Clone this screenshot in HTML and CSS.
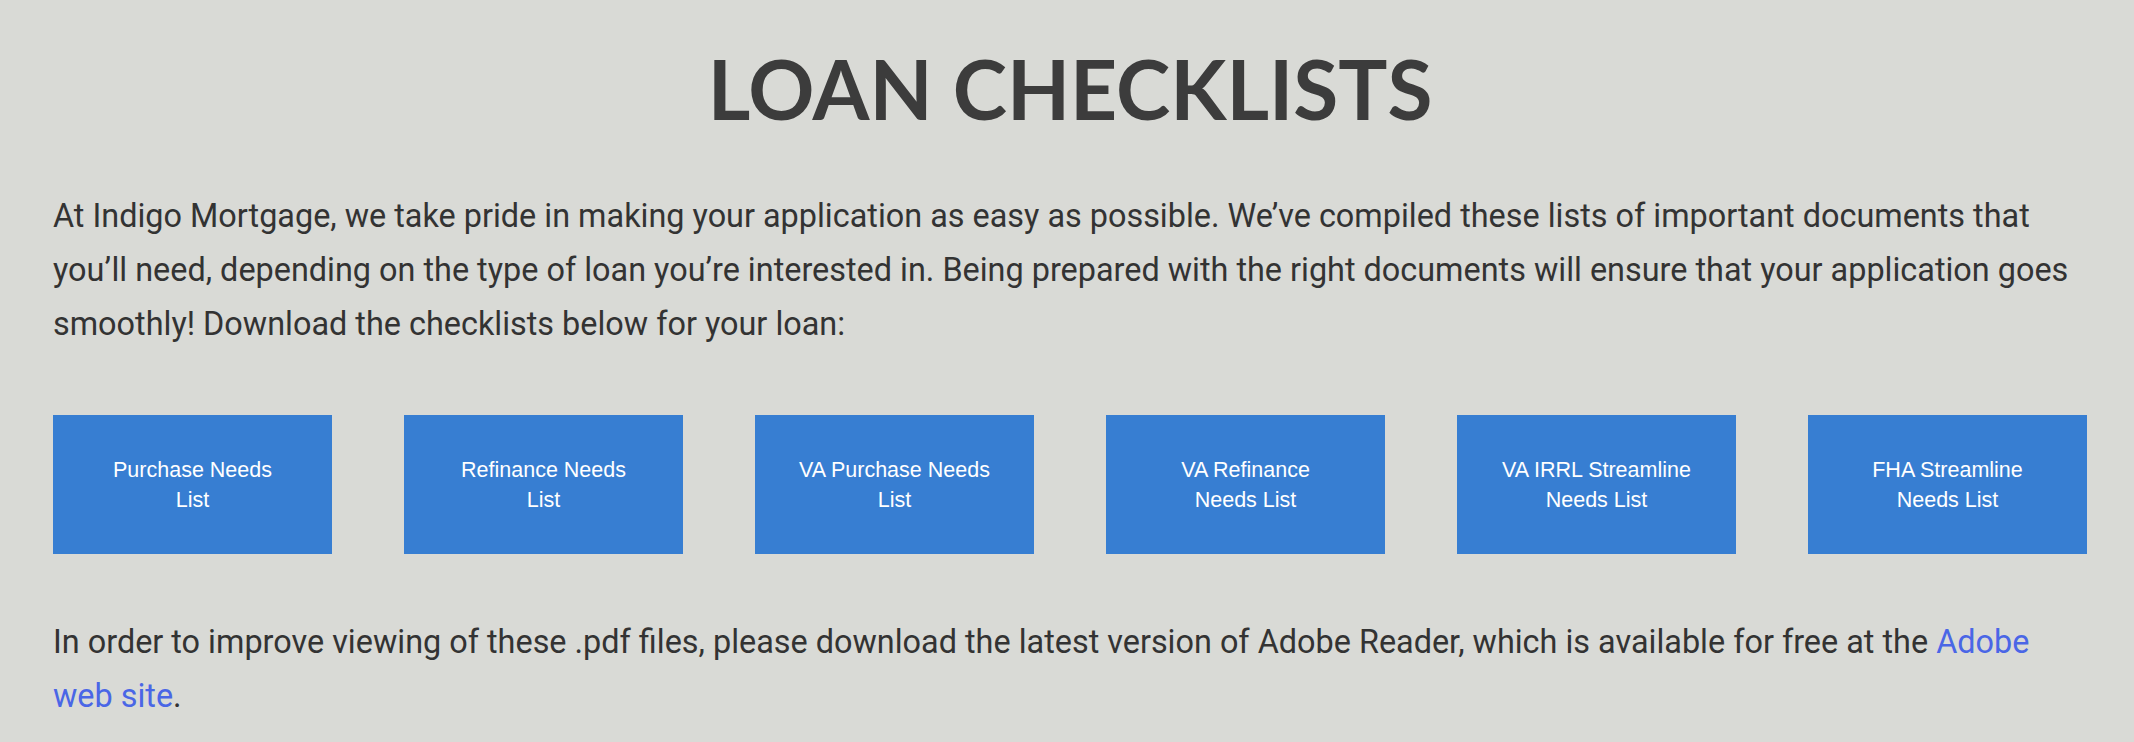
FILE: index.html
```html
<!DOCTYPE html>
<html lang="en">
<head>
<meta charset="utf-8">
<title>Loan Checklists</title>
<link rel="stylesheet" href="styles.css">
</head>
<body>
<main class="page">
  <h1 class="title">LOAN CHECKLISTS</h1>
  <p class="text intro">At Indigo Mortgage, we take pride in making your application as easy as possible. We’ve compiled these lists of important documents that you’ll need, depending on the type of loan you’re interested in. Being prepared with the right documents will ensure that your application goes smoothly! Download the checklists below for your loan:</p>
  <div class="buttons">
    <a class="btn" href="#">Purchase Needs List</a>
    <a class="btn" href="#">Refinance Needs List</a>
    <a class="btn" href="#">VA Purchase Needs List</a>
    <a class="btn" href="#">VA Refinance Needs List</a>
    <a class="btn" href="#">VA IRRL Streamline Needs List</a>
    <a class="btn" href="#">FHA Streamline Needs List</a>
  </div>
  <p class="text note">In order to improve viewing of these .pdf files, please download the latest version of Adobe Reader, which is available for free at the <a class="link" href="#">Adobe web site</a>.</p>
</main>
</body>
</html>
```
FILE: styles.css
```css
html, body {
  margin: 0;
  padding: 0;
  background: #d9dad6;
}
.page {
  padding: 33px 47px 0 53px;
}
.title {
  margin: 0;
  text-align: center;
  font-family: Lato, "Open Sans", sans-serif;
  font-weight: 700;
  font-size: 82px;
  line-height: 110px;
  color: #3c3c3c;
}
.text {
  margin: 0;
  font-family: Roboto, "Noto Sans", sans-serif;
  font-size: 32.4px;
  line-height: 54px;
  color: #333333;
}
.intro {
  margin-top: 46px;
}
.buttons {
  display: grid;
  grid-template-columns: repeat(6, 279px);
  column-gap: 72px;
  margin-top: 64px;
}
.btn {
  display: flex;
  align-items: center;
  justify-content: center;
  height: 139px;
  padding: 0 43px;
  box-sizing: border-box;
  background: #377ed2;
  color: #ffffff;
  text-decoration: none;
  text-align: center;
  font-family: "Liberation Sans", Arial, sans-serif;
  font-size: 21.5px;
  line-height: 30px;
}
.note {
  margin-top: 61px;
}
.link {
  color: #4a66e6;
  text-decoration: none;
}
```
